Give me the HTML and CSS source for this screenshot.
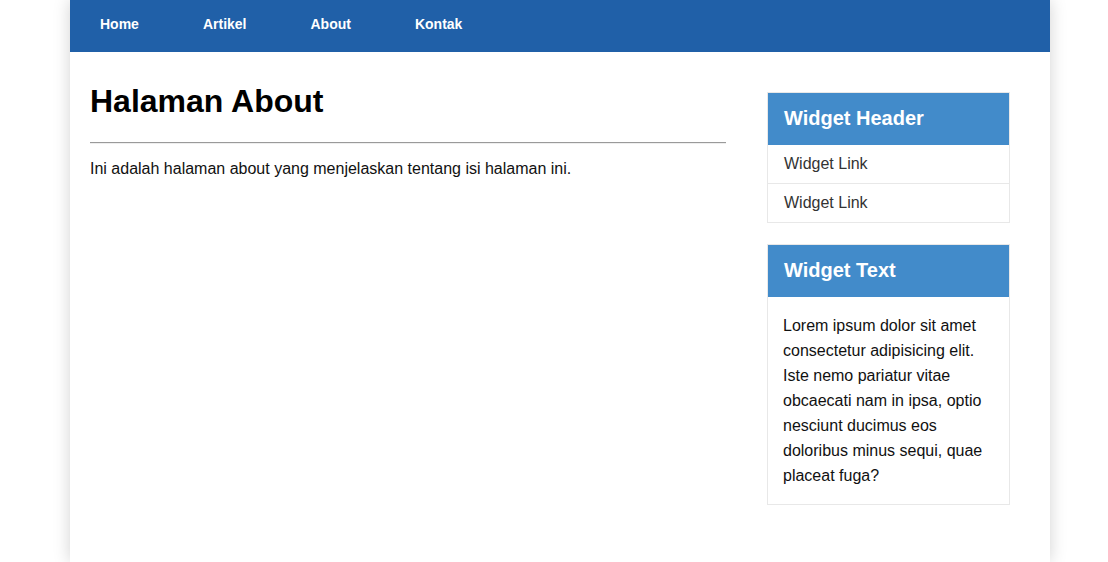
FILE: index.html
```html
<!DOCTYPE html>
<html lang="id">
<head>
<meta charset="utf-8">
<title>Halaman About</title>
<link rel="stylesheet" href="styles.css">
</head>
<body>
<div class="container">
  <nav class="navbar">
    <a href="#" class="nav-link">Home</a>
    <a href="#" class="nav-link">Artikel</a>
    <a href="#" class="nav-link">About</a>
    <a href="#" class="nav-link">Kontak</a>
  </nav>
  <div class="content">
    <main class="main">
      <h1 class="title">Halaman About</h1>
      <hr class="divider">
      <p class="text">Ini adalah halaman about yang menjelaskan tentang isi halaman ini.</p>
    </main>
    <aside class="sidebar">
      <div class="widget">
        <h3 class="widget-header">Widget Header</h3>
        <a href="#" class="widget-link">Widget Link</a>
        <a href="#" class="widget-link">Widget Link</a>
      </div>
      <div class="widget">
        <h3 class="widget-header">Widget Text</h3>
        <p class="widget-body">Lorem ipsum dolor sit amet consectetur adipisicing elit. Iste nemo pariatur vitae obcaecati nam in ipsa, optio nesciunt ducimus eos doloribus minus sequi, quae placeat fuga?</p>
      </div>
    </aside>
  </div>
</div>
</body>
</html>
```

FILE: styles.css
```css
html, body {
  margin: 0;
  padding: 0;
  background: #ffffff;
  font-family: "Liberation Sans", Arial, sans-serif;
}

body {
  padding-left: 12px;
}

.container {
  width: 980px;
  margin: 0 auto;
  min-height: 100vh;
  background: #ffffff;
  box-shadow: 0 0 16px rgba(0, 0, 0, 0.18);
}

.navbar {
  display: flex;
  background: #2060a8;
  height: 52px;
}

.nav-link {
  display: block;
  padding: 16px 30px 20px;
  margin-right: 4px;
  line-height: 16px;
  font-size: 14px;
  font-weight: bold;
  color: #ffffff;
  text-decoration: none;
}

.content {
  display: flex;
  gap: 41px;
  padding: 0 40px 0 20px;
}

.main {
  width: 636px;
}

.title {
  font-size: 32px;
  font-weight: bold;
  margin: 31px 0 0;
  line-height: 37px;
  color: #000;
}

.divider {
  margin: 22px 0 0;
  border: 0;
  border-top: 1px solid #9a9a9a;
  border-bottom: 1px solid #eeeeee;
  height: 0;
}

.text {
  margin: 16px 0 0;
  font-size: 16px;
  line-height: 18px;
  color: #111;
}

.sidebar {
  width: 243px;
  padding-top: 40px;
}

.widget {
  border: 1px solid #e8e8e8;
  margin-bottom: 21px;
}

.widget-header {
  margin: 0;
  background: #428bca;
  color: #ffffff;
  font-size: 20px;
  font-weight: bold;
  line-height: 20px;
  padding: 15px 16px 17px;
}

.widget-link {
  display: block;
  padding: 10px 16px;
  line-height: 18px;
  font-size: 16px;
  color: #333333;
  text-decoration: none;
  border-top: 1px solid #e8e8e8;
}

.widget-link:first-of-type {
  border-top: 0;
}

.widget-body {
  margin: 0;
  padding: 16px 16px 16px 15px;
  font-size: 16px;
  line-height: 25px;
  color: #111;
}
```
